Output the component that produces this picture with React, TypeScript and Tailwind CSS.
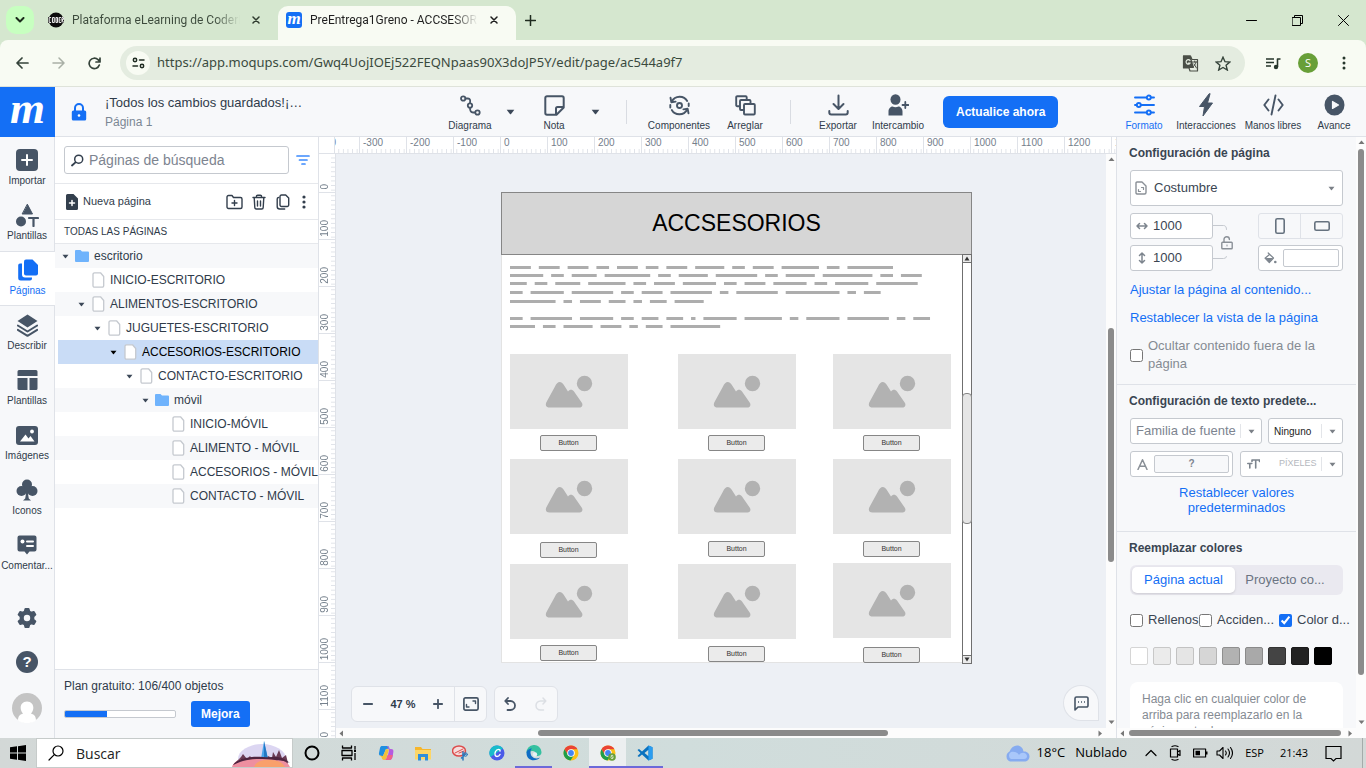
import React from "react";
import type { ReactNode } from "react";
import { clsx } from "clsx";

/* ---------- shared pieces ---------- */

const ink = "#475566";

type SvgProps = { w: number; h: number; vb?: string; className?: string; children: ReactNode };

function Svg({ w, h, vb, className, children }: SvgProps) {
  return (
    <svg
      width={w}
      height={h}
      viewBox={vb ?? `0 0 ${w} ${h}`}
      className={clsx("shrink-0", className)}
      fill="none"
      strokeLinecap="round"
      strokeLinejoin="round"
      aria-hidden="true"
    >
      {children}
    </svg>
  );
}

function Caret({ w = 8, h = 5, color = "#3c4858" }: { w?: number; h?: number; color?: string }) {
  return (
    <Svg w={w} h={h} vb="0 0 8 5">
      <path d="M0.6 0.6h6.8L4.5 4.3a.7.7 0 0 1-1 0z" fill={color} />
    </Svg>
  );
}

/* ---------- browser frame ---------- */

function BrowserTabs() {
  return (
    <div className="flex h-10 shrink-0 items-stretch bg-[#d5e7cf] text-[#1f1f1f]">
      <button aria-label="Buscar pestañas" className="ml-1.5 mt-1.5 flex size-7 items-center justify-center rounded-[10px] bg-[#c7ffc0]">
        <Svg w={10} h={6}><path d="M1.5 1l3.5 3.5L8.5 1" stroke="#1c2b1c" strokeWidth="2" /></Svg>
      </button>
      <div className="ml-3 flex w-[232px] items-center pl-0.5">
        <svg width="16" height="16" viewBox="0 0 16 16" className="shrink-0" aria-hidden="true">
          <circle cx="8" cy="8" r="7.5" fill="#0c0c0c" />
          <path d="M0 5h16v6H0z" fill="#222" />
          <path d="M3 5.500H1.200v5H3M4.500 5.500h1.800v5H4.500zM8 5.500h1.500v5H8zM13 5.500h-1.800v5H13M11.500 8h1M14 10.500v-5h1.500v2H14l1.500 3" stroke="#e8e8e8" strokeWidth="1" fill="none" />
        </svg>
        <span className="ml-2 w-[168px] overflow-hidden whitespace-nowrap bg-gradient-to-r from-[#3c4a3c] from-85% to-transparent bg-clip-text font-[Roboto,sans-serif] text-xs text-transparent">
          Plataforma eLearning de CoderHouse
        </span>
        <button aria-label="Cerrar pestaña" className="ml-auto mr-3.5 flex size-4 items-center justify-center">
          <Svg w={8} h={8}><path d="M1 1l6 6M7 1L1 7" stroke="#2f3b2f" strokeWidth="1.5" /></Svg>
        </button>
      </div>
      <div className="mt-1.5 flex w-[238px] items-center rounded-t-[10px] bg-[#f8fbf3] pb-1.5 pl-2">
        <div className="flex size-4 shrink-0 items-center justify-center overflow-hidden rounded-[3px] bg-[#146ff5] pb-[3px] font-['Liberation_Serif',serif] text-[17px] font-bold italic leading-none text-white">
          m
        </div>
        <span className="ml-2 w-[168px] overflow-hidden whitespace-nowrap bg-gradient-to-r from-[#1f1f1f] from-85% to-transparent bg-clip-text font-[Roboto,sans-serif] text-xs text-transparent">
          PreEntrega1Greno - ACCSESORIOS
        </span>
        <button aria-label="Cerrar pestaña" className="ml-auto mr-3.5 flex size-4 items-center justify-center">
          <Svg w={8} h={8}><path d="M1 1l6 6M7 1L1 7" stroke="#1f1f1f" strokeWidth="1.5" /></Svg>
        </button>
      </div>
      <button aria-label="Nueva pestaña" className="flex w-7 items-center justify-center">
        <Svg w={11} h={11}><path d="M5.5 .5v10M.5 5.5h10" stroke="#1f2b1f" strokeWidth="1.5" /></Svg>
      </button>
      <div className="ml-auto flex items-center">
        <button aria-label="Minimizar" className="flex w-[46px] justify-center"><Svg w={11} h={11}><path d="M.5 5.5h10" stroke="#000" /></Svg></button>
        <button aria-label="Restaurar" className="flex w-[46px] justify-center">
          <Svg w={11} h={11}><path d="M.5 2.5h8v8h-8zM2.5 2.5v-2h8v8h-2" stroke="#000" strokeLinejoin="miter" /></Svg>
        </button>
        <button aria-label="Cerrar" className="flex w-[46px] justify-center"><Svg w={11} h={11}><path d="M.5 .5l10 10M10.5 .5l-10 10" stroke="#000" /></Svg></button>
      </div>
    </div>
  );
}

function AddressBar() {
  return (
    <div className="flex h-[47px] shrink-0 items-center rounded-t-lg border-b border-[#dfe3da] bg-[#f8fbf3] pl-3.5 pr-5">
      <button aria-label="Atrás" className="flex w-4 justify-center">
        <Svg w={13} h={12}><path d="M12 6H1.5M6 1L1 6l5 5" stroke="#35433a" strokeWidth="1.7" /></Svg>
      </button>
      <button aria-label="Adelante" className="ml-5 flex w-4 justify-center">
        <Svg w={13} h={12}><path d="M1 6h10.500M7 1l5 5-5 5" stroke="#a9b0a6" strokeWidth="1.5" /></Svg>
      </button>
      <button aria-label="Volver a cargar" className="ml-5 flex w-4 justify-center">
        <Svg w={13} h={13}><path d="M11.3 8A5.2 5.2 0 1 1 10 2.700L12 4.700M12 1v4H8" stroke="#35433a" strokeWidth="1.7" /></Svg>
      </button>
      <div className="ml-[18px] flex h-[34px] flex-1 items-center rounded-full bg-[#e4ece0] pl-1.5 pr-3.5">
        <button aria-label="Información del sitio" className="flex size-6 shrink-0 items-center justify-center rounded-full bg-[#f8fbf3]">
          <Svg w={13} h={12}><g stroke="#1f2b22" strokeWidth="1.5"><circle cx="3" cy="3" r="1.7" /><path d="M7.5 3h4.500M1 9h4.500" /><circle cx="10" cy="9" r="1.7" /></g></Svg>
        </button>
        <input
          aria-label="Barra de direcciones"
          readOnly
          className="ml-[7px] min-w-0 flex-1 bg-transparent font-['Noto_Sans',sans-serif] text-[13px] text-[#3a4a3e] outline-none"
          value="https://app.moqups.com/Gwq4UojIOEj522FEQNpaas90X3doJP5Y/edit/page/ac544a9f7"
        />
        <button aria-label="Traducir esta página" className="flex">
          <Svg w={17} h={17}>
            <path d="M1.500 1h7l1.500 3.500H15.500v11.500H8l-1-3H1.500z" stroke="#4a4f47" strokeWidth="1.2" />
            <path d="M1 .5h7.500L12 13H1z" fill="#4a4f47" />
            <path d="M8 5.500A2.200 2.200 0 1 0 8.200 8H6.300" stroke="#e4ece0" strokeWidth="1.2" />
            <path d="M10.500 7h4.500M12.700 6v1M14 7c-.5 2-1.500 3.500-2.500 4.500M12 9l2.500 4" stroke="#4a4f47" />
          </Svg>
        </button>
        <button aria-label="Añadir a marcadores" className="ml-4 flex">
          <Svg w={16} h={15}><path d="M8 1.200l2 4.500 4.800.4-3.700 3.200 1.200 4.700L8 11.500 3.700 14l1.200-4.700L1.200 6.100 6 5.700z" stroke="#35433a" strokeWidth="1.4" strokeLinejoin="miter" /></Svg>
        </button>
      </div>
      <button aria-label="Controles multimedia" className="ml-5 flex">
        <Svg w={16} h={13}><path d="M1 2h8M1 5.500h8M1 9h5M12.500 10V2h3" stroke="#26362b" strokeWidth="1.6" strokeLinecap="butt" /><circle cx="11" cy="10" r="2.2" fill="#26362b" /></Svg>
      </button>
      <button aria-label="Perfil" className="ml-[17px] flex size-5 items-center justify-center rounded-full bg-[#689f38] text-[11px] text-white">S</button>
      <button aria-label="Menú" className="ml-6 flex">
        <Svg w={4} h={14}><g fill="#26362b"><circle cx="2" cy="2" r="1.5" /><circle cx="2" cy="7" r="1.5" /><circle cx="2" cy="12" r="1.5" /></g></Svg>
      </button>
    </div>
  );
}

/* ---------- app header ---------- */

function Tool({ label, width, active, children }: { label: string; width: string; active?: boolean; children: ReactNode }) {
  return (
    <button className={clsx("flex h-full shrink-0 flex-col items-center whitespace-nowrap text-[10px] leading-3", width, active ? "text-[#146ff5]" : "text-[#2f3b4a]")}>
      <span className="mt-1.5 flex h-6 items-center">{children}</span>
      <span className="mt-[3px]">{label}</span>
    </button>
  );
}

function AppHeader() {
  return (
    <header className="flex h-[50px] shrink-0 items-stretch border-b border-[#dfe2e8] bg-[#f7f8fa]">
      <a href="#inicio" aria-label="Moqups" className="-mb-px flex w-[55px] shrink-0 items-center justify-center bg-[#146ff5] pb-2 font-['Liberation_Serif',serif] text-[45px] font-bold italic leading-none text-white">
        m
      </a>
      <div className="flex w-[264px] shrink-0 items-center">
        <Svg w={16} h={18} className="ml-4">
          <path d="M4 8V5a4 4 0 0 1 8 0v3" stroke="#146ff5" strokeWidth="2" />
          <rect x=".8" y="7.5" width="14.4" height="10" rx="1.5" fill="#146ff5" />
          <circle cx="8" cy="12.5" r="1.3" fill="#fff" />
        </Svg>
        <div className="ml-[18px] min-w-0">
          <div className="truncate text-[13px] leading-5 text-[#2f3b4a]">¡Todos los cambios guardados!¡…</div>
          <div className="text-xs leading-[18px] text-[#7b8794]">Página 1</div>
        </div>
      </div>
      <div className="ml-[127px] flex items-center">
        <Tool label="Diagrama" width="w-12">
          <Svg w={21} h={21}><g stroke={ink} strokeWidth="1.8"><circle cx="3.2" cy="3.5" r="2.2" /><circle cx="10" cy="10.5" r="2.2" /><circle cx="17.5" cy="17.5" r="2.2" /><path d="M5.500 3.500H8c2 0 2.500 1.500 2 4.500M10 13c0 3 .8 4.500 3 4.500h2" /></g></Svg>
        </Tool>
        <button aria-label="Opciones de diagrama" className="ml-1 flex w-6 justify-center"><Caret w={9} h={6} /></button>
        <Tool label="Nota" width="w-8 ml-4">
          <Svg w={21} h={21}><path d="M3 1.300h15A1.700 1.700 0 0 1 19.700 3v9.500L12.500 19.700H3A1.700 1.700 0 0 1 1.300 18V3A1.700 1.700 0 0 1 3 1.300zM19.500 12H13.500A1.500 1.500 0 0 0 12 13.500v6" stroke={ink} strokeWidth="2" /></Svg>
        </Tool>
        <button aria-label="Opciones de nota" className="ml-[13px] flex w-6 justify-center"><Caret w={9} h={6} /></button>
        <span className="ml-[19px] h-6 w-px bg-[#d9dce2]" />
        <Tool label="Componentes" width="w-16 ml-5">
          <Svg w={21} h={21}><g stroke={ink} strokeWidth="1.9"><path d="M2.800 6.500C6 .2 15 .2 18.200 6M18.200 14.500C15 20.800 6 20.800 2.800 15" /><path d="M1.500 2.800l.9 4.400 4.200-.6M19.500 18.200l-.9-4.400-4.200.6M1.300 10v2.500M19.700 8.500V11" /><circle cx="10.5" cy="10.5" r="2.5" /></g></Svg>
        </Tool>
        <Tool label="Arreglar" width="w-11 ml-3">
          <Svg w={21} h={21}><g stroke={ink} strokeWidth="1.9" fill="#f7f8fa"><rect x="1.2" y="1.2" width="10.500" height="10" rx="1" /><rect x="5" y="5" width="10.500" height="10" rx="1" /><rect x="9" y="9" width="10.800" height="10.500" rx="1" /></g></Svg>
        </Tool>
        <span className="ml-[23px] h-6 w-px bg-[#d9dce2]" />
        <Tool label="Exportar" width="w-10 ml-[27px]">
          <Svg w={21} h={22}><path d="M10.500 1.500v13M5.500 10l5 5 5-5M1.300 17v1.500a2 2 0 0 0 2 2h14.400a2 2 0 0 0 2-2V17" stroke={ink} strokeWidth="2" /></Svg>
        </Tool>
        <Tool label="Intercambio" width="w-14 ml-3">
          <Svg w={21} h={22}><ellipse cx="7.5" cy="5.5" rx="5" ry="5.3" fill={ink} /><path d="M.5 21.500v-4c0-3.500 2.500-5 4-5 2 1 4 1 6 0 1.500 0 4 1.500 4 5v4z" fill={ink} /><path d="M17.300 8v6M14.500 11h5.800" stroke={ink} strokeWidth="1.8" /></Svg>
        </Tool>
        <button className="ml-[17px] h-8 shrink-0 rounded-md bg-[#146ff5] px-[13px] text-xs font-bold text-white">Actualice ahora</button>
      </div>
      <div className="ml-auto flex pr-3.5">
        <Tool label="Formato" width="w-10" active>
          <Svg w={21} h={22}><g stroke="#146ff5" strokeWidth="1.9"><path d="M1 3.500h11.500M17 3.500h3M1 11h1.500M7 11h13M1 18.500h11.500M17 18.500h3" /><circle cx="14.8" cy="3.5" r="2" /><circle cx="4.8" cy="11" r="2" /><circle cx="14.8" cy="18.5" r="2" /></g></Svg>
        </Tool>
        <Tool label="Interacciones" width="w-[60px] ml-3">
          <Svg w={16} h={24}><path d="M11 1L1.500 13.500h5L5 23 14.500 10H9.500L12 1z" fill={ink} stroke={ink} /></Svg>
        </Tool>
        <Tool label="Manos libres" width="w-[58px] ml-2">
          <Svg w={21} h={22}><path d="M5.500 5.500L1.300 11l4.200 5.500M15.500 5.500l4.200 5.500-4.200 5.500M12.500 1.500l-4 19" stroke={ink} strokeWidth="1.9" /></Svg>
        </Tool>
        <Tool label="Avance" width="w-9 ml-3.5">
          <Svg w={21} h={22}><ellipse cx="10.5" cy="11" rx="10" ry="10.5" fill={ink} /><path d="M8.500 7.500v7l6-3.500z" fill="#f7f8fa" stroke="#f7f8fa" strokeWidth="1.2" /></Svg>
        </Tool>
      </div>
    </header>
  );
}

/* ---------- icon rail ---------- */

const railItems: { label: string; icon: ReactNode; active?: boolean }[] = [
  {
    label: "Importar",
    icon: <Svg w={22} h={22}><rect width="22" height="22" rx="4" fill={ink} /><path d="M11 6v10M6 11h10" stroke="#fff" strokeWidth="2" /></Svg>,
  },
  {
    label: "Plantillas",
    icon: <Svg w={23} h={23}><path d="M11.500.5l5 9.500h-10z" fill={ink} stroke={ink} /><circle cx="5" cy="17.5" r="5" fill={ink} /><path d="M13 14h9M17.500 14v8" stroke={ink} strokeWidth="2.2" /></Svg>,
  },
  {
    label: "Páginas",
    active: true,
    icon: <Svg w={22} h={22}><path d="M9 .5h6.500L21 6v8.500a2 2 0 0 1-2 2H9a2 2 0 0 1-2-2v-12a2 2 0 0 1 2-2z" fill="#146ff5" /><path d="M5 4.500H3a1.800 1.800 0 0 0-1.800 1.800V19A2.500 2.500 0 0 0 3.700 21.500H13a2 2 0 0 0 2-2v-1H8a3 3 0 0 1-3-3z" fill="#146ff5" /></Svg>,
  },
  {
    label: "Describir",
    icon: <Svg w={21} h={23}><path d="M10.500.5l10 6.500-10 6.500L.5 7z" fill={ink} /><path d="M.8 11.500l9.700 6 9.700-6M.8 15.800l9.700 6 9.700-6" stroke={ink} strokeWidth="2" /></Svg>,
  },
  {
    label: "Plantillas",
    icon: <Svg w={21} h={20}><path d="M2 0h17a1.500 1.500 0 0 1 1.500 1.500V6H.5V1.500A1.500 1.500 0 0 1 2 0zM.5 8h10v12H2a1.500 1.500 0 0 1-1.500-1.500zM12.500 8h8v10.500A1.500 1.500 0 0 1 19 20h-6.500z" fill={ink} /></Svg>,
  },
  {
    label: "Imágenes",
    icon: <Svg w={22} h={19}><rect width="22" height="19" rx="3" fill={ink} /><path d="M4 15.500l5.500-7 3 4L14.500 10l4 5.500z" fill="#fff" /><circle cx="16" cy="5.5" r="1.9" fill="#fff" /></Svg>,
  },
  {
    label: "Iconos",
    icon: <Svg w={22} h={22}><circle cx="11" cy="5.5" r="5" fill={ink} /><circle cx="5.5" cy="12" r="5" fill={ink} /><circle cx="16.5" cy="12" r="5" fill={ink} /><path d="M8 8h6l-1.800 8 .6 3.500 2.200 2H7l2.200-2 .6-3.500z" fill={ink} /></Svg>,
  },
  {
    label: "Comentar...",
    icon: <Svg w={20} h={20}><path d="M2.500.5h15a2 2 0 0 1 2 2v12a2 2 0 0 1-2 2h-5L10 19.500l-2.500-3h-5a2 2 0 0 1-2-2v-12a2 2 0 0 1 2-2z" fill={ink} /><circle cx="5.5" cy="6.5" r="2" fill="#fff" /><path d="M10 6.500h6M10 11h6" stroke="#fff" strokeWidth="2" /></Svg>,
  },
];

function Rail() {
  return (
    <nav className="flex w-[55px] shrink-0 flex-col border-r border-[#dfe2e8] bg-[#f7f8fa] pt-1">
      {railItems.map((item, i) => (
        <button
          key={i}
          className={clsx(
            "flex h-[55px] flex-col items-center overflow-hidden whitespace-nowrap border-y text-[10px] leading-3",
            item.active ? "-mr-px border-[#dfe2e8] bg-white text-[#146ff5]" : "border-transparent text-[#2f3b4a]"
          )}
        >
          <span className="mt-1.5 flex h-6 items-center">{item.icon}</span>
          <span className="mt-[3px]">{item.label}</span>
        </button>
      ))}
      <div className="mt-auto flex flex-col items-center pb-[15px]">
        <button aria-label="Ajustes" className="flex">
          <Svg w={22} h={22} vb="0 0 24 24">
            <path
              fill={ink}
              fillRule="evenodd"
              stroke={ink}
              strokeWidth="2"
              d="M10.300 2h3.400l.9 3 1.900 1.100 3-.8 1.700 3-2.200 2.200v3l2.200 2.200-1.700 3-3-.8-1.900 1.100-.9 3h-3.400l-.9-3-1.900-1.100-3 .8-1.700-3L5 13.500v-3L2.800 8.300l1.700-3 3 .8L9.400 5zM12 7.500a4.500 4.500 0 1 0 0 9 4.500 4.500 0 0 0 0-9z"
            />
          </Svg>
        </button>
        <button aria-label="Ayuda" className="mt-[22px] flex size-[22px] items-center justify-center rounded-full bg-[#475566] text-[15px] font-bold text-white">?</button>
        <button aria-label="Cuenta" className="mt-5 flex">
          <Svg w={30} h={30}>
            <circle cx="15" cy="15" r="15" fill="#c4c4c4" />
            <path d="M6 27.500c0-5 2.500-6 5-7-4-4-3-12 4-12s8 8 4 12c2.500 1 5 2 5 7C19 31 11 31 6 27.500z" fill="#fff" />
          </Svg>
        </button>
      </div>
    </nav>
  );
}

/* ---------- pages panel ---------- */

type Node = { name: string; level: number; folder?: boolean; open?: boolean; selected?: boolean };

const tree: Node[] = [
  { name: "escritorio", level: 0, folder: true, open: true },
  { name: "INICIO-ESCRITORIO", level: 1 },
  { name: "ALIMENTOS-ESCRITORIO", level: 1, open: true },
  { name: "JUGUETES-ESCRITORIO", level: 2, open: true },
  { name: "ACCESORIOS-ESCRITORIO", level: 3, open: true, selected: true },
  { name: "CONTACTO-ESCRITORIO", level: 4, open: true },
  { name: "móvil", level: 5, folder: true, open: true },
  { name: "INICIO-MÓVIL", level: 6 },
  { name: "ALIMENTO - MÓVIL", level: 6 },
  { name: "ACCESORIOS - MÓVIL", level: 6 },
  { name: "CONTACTO - MÓVIL", level: 6 },
];

function TreeRow({ node, index }: { node: Node; index: number }) {
  return (
    <li className={clsx("pl-[3px]", index % 2 === 0 && !node.selected && "bg-[#f7f8fa]")}>
      <button
        className={clsx(
          "flex h-6 w-full items-center overflow-hidden whitespace-nowrap text-left text-xs",
          node.selected ? "bg-[#c9dcf6] text-black" : "text-[#2f3b4a]"
        )}
        style={{ paddingLeft: 4 + node.level * 16 }}
      >
        <span className="flex w-[13px] shrink-0">{node.open && <Caret w={7} h={5} color={node.selected ? "#000" : "#3c4858"} />}</span>
        <span className="flex w-[19px] shrink-0">
          {node.folder ? (
            <Svg w={14} h={12}><path d="M1 0h4.500l1.500 1.500H13a1 1 0 0 1 1 1V11a1 1 0 0 1-1 1H1a1 1 0 0 1-1-1V1a1 1 0 0 1 1-1z" fill="#6fb3fc" /></Svg>
          ) : (
            <Svg w={14} h={16}><path d="M3.500.8h6L12.700 4.500v9.200a1.500 1.500 0 0 1-1.500 1.500H3.500A1.500 1.500 0 0 1 2 13.700V2.300A1.500 1.500 0 0 1 3.500.8z" stroke="#c5c9cf" strokeWidth="1.3" fill="#fff" /></Svg>
          )}
        </span>
        {node.name}
      </button>
    </li>
  );
}

function PagesPanel() {
  return (
    <aside className="flex w-[264px] shrink-0 flex-col border-r border-[#dfe2e8] bg-white text-[#2f3b4a]">
      <div className="flex h-[47px] shrink-0 items-center border-b border-[#e6e8ec] pl-[9px]">
        <label className="flex h-7 w-[225px] items-center rounded-[3px] border border-[#c5c9cf] pl-1.5">
          <Svg w={13} h={13}><circle cx="7.7" cy="5.2" r="4" stroke="#333f4d" strokeWidth="1.5" /><path d="M4.500 8.300L1 11.500" stroke="#333f4d" strokeWidth="1.8" /></Svg>
          <input type="search" aria-label="Buscar páginas" placeholder="Páginas de búsqueda" className="ml-[5px] w-full min-w-0 bg-transparent text-sm outline-none placeholder:text-[#7d8490]" />
        </label>
        <button aria-label="Filtrar" className="ml-[7px] flex">
          <Svg w={14} h={12}><path d="M1 2h12M3.500 6h7.500M6 10h3" stroke="#3d8bfd" strokeWidth="1.7" /></Svg>
        </button>
      </div>
      <div className="flex h-9 shrink-0 items-center border-b border-[#e6e8ec] pl-[11px] pr-3">
        <button className="flex items-center text-[11px]">
          <Svg w={12} h={16}><path d="M1.500 0h6L12 4.500V14.500A1.500 1.500 0 0 1 10.500 16h-9A1.500 1.500 0 0 1 0 14.500v-13A1.500 1.500 0 0 1 1.500 0z" fill="#333f4d" /><path d="M6 6.500v5M3.500 9h5" stroke="#fff" strokeWidth="1.5" /></Svg>
          <span className="ml-[5px]">Nueva página</span>
        </button>
        <div className="ml-auto flex items-center">
          <button aria-label="Nueva carpeta" className="flex">
            <Svg w={17} h={16}><path d="M2.500 1.500h3.500l1.500 2h7a1.500 1.500 0 0 1 1.500 1.500v8a1.500 1.500 0 0 1-1.500 1.500h-12A1.500 1.500 0 0 1 1 13V3a1.500 1.500 0 0 1 1.500-1.500zM8.500 6.500v5M6 9h5" stroke="#333f4d" strokeWidth="1.4" /></Svg>
          </button>
          <button aria-label="Eliminar" className="ml-[9px] flex">
            <Svg w={14} h={16}><path d="M1 3.500h12M4.500 3.500v-1A1.200 1.200 0 0 1 5.700 1.200h2.600a1.200 1.200 0 0 1 1.200 1.300v1M2.200 3.500l.6 10a1.500 1.500 0 0 0 1.500 1.500h5.400a1.500 1.500 0 0 0 1.500-1.500l.6-10M5.500 7v5M8.500 7v5" stroke="#333f4d" strokeWidth="1.4" /></Svg>
          </button>
          <button aria-label="Duplicar" className="ml-2.5 flex">
            <Svg w={14} h={16}><path d="M5.500 1h4.200L12.700 4v7a1.500 1.500 0 0 1-1.500 1.500H5.500A1.500 1.500 0 0 1 4 11V2.500A1.500 1.500 0 0 1 5.500 1zM2.500 3.500A1.500 1.500 0 0 0 1.200 5v7.500A2.500 2.500 0 0 0 3.700 15h5" stroke="#333f4d" strokeWidth="1.4" /></Svg>
          </button>
          <button aria-label="Más opciones" className="ml-3 flex">
            <Svg w={4} h={14}><g fill="#333f4d"><circle cx="2" cy="2" r="1.6" /><circle cx="2" cy="7" r="1.6" /><circle cx="2" cy="12" r="1.6" /></g></Svg>
          </button>
        </div>
      </div>
      <h2 className="flex h-6 shrink-0 items-center border-b border-[#e6e8ec] pl-[9px] text-[10px]">TODAS LAS PÁGINAS</h2>
      <ul className="flex-1 overflow-hidden">
        {tree.map((node, i) => <TreeRow key={node.name} node={node} index={i} />)}
      </ul>
      <div className="h-[69px] shrink-0 border-t border-[#dfe2e8] bg-[#f7f8fa] pl-[9px] pt-2">
        <div className="text-xs leading-4">Plan gratuito: 106/400 objetos</div>
        <div className="mt-[7px] flex items-center">
          <div className="h-2 w-28 overflow-hidden rounded-[2px] border border-[#c5c9cf] bg-white">
            <div className="h-full w-[38%] bg-[#146ff5]" />
          </div>
          <button className="ml-[15px] h-[26px] rounded-[3px] bg-[#146ff5] px-2.5 text-xs font-bold text-white">Mejora</button>
        </div>
      </div>
    </aside>
  );
}

/* ---------- canvas ---------- */

function HorizontalRuler() {
  return (
    <div className="flex h-[17px] shrink-0 overflow-hidden border-b border-[#dfe2e8] bg-white">
      <div className="w-4 shrink-0 border-r border-[#dfe2e8]" />
      <div className="-ml-[23px] flex [clip-path:inset(0_0_0_23px)]">
        {Array.from({ length: 18 }, (_, i) => (
          <div
            key={i}
            className="w-[47px] shrink-0 border-l border-[#dfe2e8] bg-[linear-gradient(to_right,#dfe2e8_1px,transparent_1px)] bg-[length:10%_4px] bg-bottom bg-repeat-x pl-[3px] text-[10px] leading-3 text-[#75808c]"
          >
            {(i - 4) * 100}
          </div>
        ))}
      </div>
    </div>
  );
}

function VerticalRuler() {
  return (
    <div className="w-[17px] shrink-0 overflow-hidden border-r border-[#dfe2e8] bg-white">
      <div className="-mt-2">
        {Array.from({ length: 13 }, (_, i) => (
          <div
            key={i}
            className="flex h-[47px] items-end border-b border-[#dfe2e8] bg-[linear-gradient(to_bottom,#dfe2e8_1px,transparent_1px)] bg-[length:4px_10%] bg-right bg-repeat-y pb-0.5"
          >
            <span className="rotate-180 text-[10px] leading-[11px] text-[#75808c] [writing-mode:vertical-rl]">{i * 100}</span>
          </div>
        ))}
      </div>
    </div>
  );
}

/* Word lengths of the placeholder copy, line by line, with each line's top. */
const copyLines: { y: number; words: number[] }[] = [
  { y: 74, words: [5, 5, 5, 3, 5, 3, 5, 7, 3, 5, 9, 3, 11] },
  { y: 82, words: [8, 3, 6, 11, 3, 7, 10, 3, 7, 12, 3, 5] },
  { y: 90, words: [4, 3, 6, 9, 3, 5, 8, 3, 5, 8, 3, 8, 10] },
  { y: 99, words: [3, 8, 10, 3, 5, 10, 2, 10, 13, 2, 4] },
  { y: 108, words: [11, 2, 5, 4, 2, 4, 7] },
  { y: 125, words: [3, 10, 8, 3, 4, 4, 1, 8, 9, 2, 8, 10, 2, 4] },
  { y: 133, words: [6, 3, 7, 5, 2, 4, 12] },
];

function PlaceholderCopy() {
  const unit = 4.115;
  return (
    <svg width="471" height="150" className="absolute -left-px -top-px" aria-hidden="true">
      {copyLines.map((line) => {
        let at = 0;
        return line.words.map((n, i) => {
          const x = 9 + at * unit;
          at += n + 2;
          return <rect key={`${line.y}-${i}`} x={x} y={line.y} width={n * unit + 0.3} height="3" fill="#adadad" />;
        });
      })}
    </svg>
  );
}

const cards: { x: number; y: number; by: number }[] = [
  { x: 8, y: 161, by: 242 }, { x: 176, y: 161, by: 242 }, { x: 331, y: 161, by: 242 },
  { x: 8, y: 266, by: 349 }, { x: 176, y: 266, by: 348 }, { x: 331, y: 266, by: 348 },
  { x: 8, y: 371, by: 452 }, { x: 176, y: 371, by: 453 }, { x: 331, y: 370, by: 454 },
];

function Mockup() {
  return (
    <div className="absolute left-[165px] top-[38px] h-[471px] w-[471px] border border-[#e3e3e3] bg-white">
      <div className="absolute -left-px -top-px flex h-[63px] w-[471px] items-center justify-center border border-[#868686] bg-[#d6d6d6] text-[23px] text-black">
        ACCSESORIOS
      </div>
      <PlaceholderCopy />
      {cards.map((c, i) => (
        <React.Fragment key={i}>
          <svg width="118" height="75" viewBox="0 0 118 75" className="absolute" style={{ left: c.x, top: c.y }} aria-hidden="true">
            <rect width="118" height="75" fill="#e5e5e5" />
            <path d="M36.500 48L45 32.500c2.500-6 6.500-6 9.500-.5l3.500 5.500c1.500-2.500 4.500-2.500 6 0l8 11.500c1.200 2.500-.2 4.500-2.500 4.500H39.500c-3.500 0-4.500-2.500-3-5.500z" fill="#b2b2b2" />
            <circle cx="74.5" cy="29.5" r="7.7" fill="#b2b2b2" />
          </svg>
          <button
            className="absolute flex h-4 w-[57px] items-center justify-center rounded-[2px] border border-[#868686] bg-[#ebebeb] text-[7px] text-[#333]"
            style={{ left: c.x + 30, top: c.by }}
          >
            Button
          </button>
        </React.Fragment>
      ))}
      <div className="absolute left-[460px] top-[61px] flex h-[410px] w-2.5 flex-col border border-[#6f6f6f] bg-white">
        <div className="flex h-2 items-center justify-center border-b border-[#6f6f6f] bg-[#ebebeb]"><Svg w={6} h={5}><path d="M3 .5L5.500 4.500h-5z" fill="#333" /></Svg></div>
        <div className="-mx-px mt-[130px] h-[131px] rounded-[4px] border border-[#868686] bg-[#e5e5e5]" />
        <div className="mt-auto flex h-2 items-center justify-center border-t border-[#6f6f6f] bg-[#ebebeb]"><Svg w={6} h={5}><path d="M3 4.500L.5.5h5z" fill="#333" /></Svg></div>
      </div>
    </div>
  );
}

function ScrollArrow({ dir }: { dir: "up" | "down" | "left" | "right" }) {
  const paths = { up: "M3.500 1.500L6.500 5H.5z", down: "M3.500 5L.5 1.500h6z", left: "M1.500 3.500L5 .5v6z", right: "M5 3.500L1.500.5v6z" };
  return <Svg w={7} h={7}><path d={paths[dir]} fill="#777" /></Svg>;
}

function Canvas() {
  return (
    <main className="flex min-w-0 flex-1 flex-col">
      <HorizontalRuler />
      <div className="flex min-h-0 flex-1">
        <VerticalRuler />
        <div className="flex min-w-0 flex-1 flex-col">
          <div className="flex min-h-0 flex-1">
            <div className="relative min-w-0 flex-1 overflow-hidden bg-[#edf0f5]">
              <Mockup />
              <div className="absolute bottom-[6px] left-[15px] flex gap-[7px] text-[#2f3b4a]">
                <div className="flex h-9 items-center rounded-md border border-[#dfe2e8] bg-[#f7f8fa]">
                  <button aria-label="Alejar" className="flex w-8 justify-center"><Svg w={10} h={10}><path d="M.8 5h8.400" stroke={ink} strokeWidth="1.8" /></Svg></button>
                  <span className="w-[38px] text-center text-[11px] font-bold">47 %</span>
                  <button aria-label="Acercar" className="flex w-8 justify-center"><Svg w={10} h={10}><path d="M.8 5h8.400M5 .8v8.400" stroke={ink} strokeWidth="1.8" /></Svg></button>
                  <button aria-label="Ajustar a la ventana" className="flex h-full w-8 items-center justify-center border-l border-[#dfe2e8]">
                    <Svg w={16} h={14}><rect x=".9" y=".9" width="14.200" height="12.200" rx="1.500" stroke={ink} strokeWidth="1.7" /><path d="M10 4h2.500v2.500M6 10H3.500V7.500" stroke={ink} strokeWidth="1.4" /></Svg>
                  </button>
                </div>
                <div className="flex h-9 items-center rounded-md border border-[#dfe2e8] bg-[#f7f8fa]">
                  <button aria-label="Deshacer" className="flex w-[30px] justify-center"><Svg w={12} h={14}><path d="M4 1L1.200 4 4 7M1.500 4H6.500a4.500 4.500 0 0 1 0 9H3.500" stroke={ink} strokeWidth="1.8" /></Svg></button>
                  <button aria-label="Rehacer" className="flex w-8 justify-center"><Svg w={12} h={14}><path d="M8 1l2.800 3L8 7M10.500 4H5.500a4.500 4.500 0 0 0 0 9H8.500" stroke="#dcdfe4" strokeWidth="1.5" /></Svg></button>
                </div>
              </div>
              <button aria-label="Chat" className="absolute bottom-[7px] right-[7px] flex size-9 items-center justify-center rounded-full rounded-br-[3px] border border-[#dfe2e8] bg-[#f7f8fa]">
                <Svg w={15} h={15}><path d="M2.500 1h10A1.500 1.500 0 0 1 14 2.500v7a1.500 1.500 0 0 1-1.500 1.500H4L1 14V2.500A1.500 1.500 0 0 1 2.500 1z" stroke={ink} strokeWidth="1.6" /><path d="M4 6h1M7 6h1M10 6h1" stroke={ink} strokeWidth="1.3" strokeLinecap="butt" /></Svg>
              </button>
            </div>
            <div className="flex w-2.5 shrink-0 flex-col items-center bg-[#fcfcfc] pb-0.5 pt-0.5">
              <ScrollArrow dir="up" />
              <div className="mt-[165px] h-[234px] w-1.5 rounded-full bg-[#8b8b8b]" />
              <div className="mt-auto"><ScrollArrow dir="down" /></div>
            </div>
          </div>
          <div className="flex h-2.5 shrink-0 items-center bg-[#fcfcfc] pl-0.5 pr-3">
            <ScrollArrow dir="left" />
            <div className="ml-[193px] h-1.5 w-[350px] rounded-full bg-[#8b8b8b]" />
            <div className="ml-auto"><ScrollArrow dir="right" /></div>
          </div>
        </div>
      </div>
    </main>
  );
}

/* ---------- format panel ---------- */

const field = "flex h-[26px] items-center rounded-[3px] border border-[#c5c9cf] bg-white";

function SelectField({ label, value, className, selectClass, lead, divided }: { label: string; value: string; className: string; selectClass: string; lead?: ReactNode; divided?: boolean }) {
  return (
    <label className={clsx(className)}>
      {lead}
      <select aria-label={label} className={clsx("min-w-0 flex-1 appearance-none bg-transparent outline-none", selectClass)}>
        <option>{value}</option>
      </select>
      <span className={clsx("flex h-3.5 w-[21px] items-center justify-center", divided && "border-l border-[#e3e5e9]")}><Caret w={7} color="#7b8087" /></span>
    </label>
  );
}

function Check({ label, checked, className, labelClass }: { label: string; checked?: boolean; className: string; labelClass: string }) {
  return (
    <label className={clsx("flex items-center gap-[5px]", className)}>
      <input type="checkbox" defaultChecked={checked} className="size-[13px] shrink-0 accent-[#146ff5]" />
      <span className={labelClass}>{label}</span>
    </label>
  );
}

const swatches = ["bg-white border-[#d5d5d5]", "bg-[#ebebeb] border-[#c8c8c8]", "bg-[#e5e5e5] border-[#c2c2c2]", "bg-[#d6d6d6] border-[#b5b5b5]", "bg-[#b2b2b2] border-[#8f8f8f]", "bg-[#a9a9a9] border-[#8a8a8a]", "bg-[#444444] border-[#333333]", "bg-[#222222] border-[#1a1a1a]", "bg-black border-black"];

function FormatPanel() {
  return (
    <aside className="flex w-[250px] shrink-0 border-l border-[#dfe2e8] bg-[#f7f8fa] text-[13px] text-[#3a4552]">
      <div className="flex min-w-0 flex-1 flex-col">
        <div className="min-h-0 flex-1 overflow-hidden">
          <section className="h-[248px] border-b border-[#dfe2e8] pl-[13px] pr-[13px] pt-2">
            <h3 className="-ml-px text-xs font-bold leading-4">Configuración de página</h3>
            <SelectField
              label="Tamaño de página"
              value="Costumbre"
              className="mt-[9px] flex h-9 items-center rounded-[3px] border border-[#c5c9cf] bg-white pl-1"
              selectClass="ml-[7px] text-[13px]"
              lead={<Svg w={12} h={14}><path d="M2 1h5l4 4v6.500A1.500 1.500 0 0 1 9.500 13H2A1.300 1.300 0 0 1 1 12V2a1 1 0 0 1 1-1z" stroke="#8a9097" strokeWidth="1.4" /><path d="M6.500 6.500H8.500v2M5.500 10.500h-2v-2" stroke="#8a9097" strokeWidth="1.2" /></Svg>}
            />
            <div className="mt-[7px] flex">
              <div className="flex w-[83px] flex-col gap-1.5">
                <label className={clsx(field, "pl-[5px]")}>
                  <Svg w={12} h={8}><path d="M1 4h10M3.500 1.500L1 4l2.500 2.500M8.500 1.500L11 4 8.500 6.500" stroke="#7d858e" strokeWidth="1.5" /></Svg>
                  <input aria-label="Ancho" defaultValue="1000" className="ml-[5px] w-full min-w-0 bg-transparent outline-none" />
                </label>
                <label className={clsx(field, "pl-[5px]")}>
                  <Svg w={12} h={12}><path d="M6 1v10M3.500 3.500L6 1l2.500 2.500M3.500 8.500L6 11l2.500-2.500" stroke="#7d858e" strokeWidth="1.5" /></Svg>
                  <input aria-label="Alto" defaultValue="1000" className="ml-[5px] w-full min-w-0 bg-transparent outline-none" />
                </label>
              </div>
              <button aria-label="Bloquear proporción" className="flex">
                <Svg w={22} h={58}>
                  <path d="M0 12.500h10.500q3 0 3 4M0 45.500h10.500q3 0 3-2" stroke="#c5c9cf" />
                  <rect x="8.8" y="29.3" width="10.400" height="6.500" rx=".8" stroke="#8a9097" strokeWidth="1.4" />
                  <path d="M11 29v-2.500a2.700 2.700 0 0 1 5.400 0" stroke="#8a9097" strokeWidth="1.4" /><path d="M14 32v1" stroke="#8a9097" />
                </Svg>
              </button>
              <div className="ml-auto flex w-[85px] flex-col gap-1.5">
                <div className="flex h-[26px] rounded-[3px] border border-[#dfe2e8]">
                  <button aria-label="Vertical" className="flex w-[41px] items-center justify-center"><Svg w={10} h={16}><rect x=".8" y=".8" width="8.400" height="14.400" rx="1.500" stroke="#66727f" strokeWidth="1.6" /></Svg></button>
                  <button aria-label="Horizontal" className="flex flex-1 items-center justify-center border-l border-[#dfe2e8]"><Svg w={16} h={10}><rect x=".8" y=".8" width="14.400" height="8.400" rx="1.500" stroke="#66727f" strokeWidth="1.6" /></Svg></button>
                </div>
                <div className={clsx(field, "pl-[5px] pr-[3px]")}>
                  <Svg w={13} h={12}><path d="M4.200 1l5.300 5-4.200 4.500L1 6.200 5.500 2.500" stroke="#7d858e" strokeWidth="1.2" /><path d="M1.500 6h7.500l-3.700 4.200z" fill="#7d858e" /><circle cx="11.3" cy="10" r="1.3" fill="#7d858e" /></Svg>
                  <button aria-label="Color de fondo" className="ml-auto h-[18px] w-14 rounded-[2px] border border-[#c5c9cf] bg-white" />
                </div>
              </div>
            </div>
            <a href="#ajustar" className="mt-[11px] block leading-4 text-[#146ff5]">Ajustar la página al contenido...</a>
            <a href="#restablecer" className="mt-3 block leading-4 text-[#146ff5]">Restablecer la vista de la página</a>
            <Check label="Ocultar contenido fuera de la página" className="mt-[11px]" labelClass="leading-[18px] text-[#858b93]" />
          </section>
          <section className="h-[147px] border-b border-[#dfe2e8] px-[13px] pt-2">
            <h3 className="-ml-px truncate text-xs font-bold leading-4">Configuración de texto predete...</h3>
            <div className="mt-[9px] flex gap-1.5">
              <SelectField label="Familia de fuente" value="Familia de fuente" className={clsx(field, "w-[132px] pl-[5px]")} selectClass="text-[13px] text-[#7d8490]" divided />
              <SelectField label="Estilo de fuente" value="Ninguno" className={clsx(field, "w-[75px] pl-[5px]")} selectClass="text-[10px] text-[#222]" divided />
            </div>
            <div className="mt-[7px] flex justify-between">
              <div className={clsx(field, "w-[103px] pl-1.5 pr-[3px]")}>
                <Svg w={11} h={11}><path d="M1 10.500L5.500.8l4.500 9.700M2.500 7.300h6" stroke="#8a9097" strokeWidth="1.5" /></Svg>
                <button aria-label="Color de texto" className="ml-auto h-[18px] w-[75px] rounded-[2px] border border-[#c5c9cf] bg-[#f7f8fa] text-[10px] font-bold leading-none text-[#7d8490]">?</button>
              </div>
              <SelectField
                label="Tamaño de texto"
                value="PÍXELES"
                className={clsx(field, "w-[103px] pl-1.5")}
                selectClass="pl-[19px] text-[9px] text-[#b4b8be]"
                lead={<Svg w={13} h={10}><path d="M5 1h7.500M5 1v1.500M12.500 1v1.500M8.700 1v8M.8 4.500h4M2.800 4.500V9" stroke="#7d858e" strokeWidth="1.600" /></Svg>}
                divided
              />
            </div>
            <a href="#valores" className="mx-auto mt-2 block w-[140px] text-center leading-[15px] text-[#146ff5]">Restablecer valores predeterminados</a>
          </section>
          <section className="pt-2 pl-[13px]">
            <h3 className="-ml-px text-xs font-bold leading-4">Reemplazar colores</h3>
            <div className="mt-[9px] flex h-[30px] w-[213px] rounded-md bg-[#eae9f0] p-0.5">
              <button className="w-[103px] rounded-[5px] bg-white text-[#146ff5] shadow-sm">Página actual</button>
              <button className="flex-1 pr-1.5 text-[#6b7482]">Proyecto co...</button>
            </div>
            <div className="mt-[17px] flex whitespace-nowrap">
              <Check label="Rellenos" className="w-[69px]" labelClass="leading-4" />
              <Check label="Acciden..." className="w-20" labelClass="leading-4" />
              <Check label="Color d..." checked className="w-[75px]" labelClass="leading-4" />
            </div>
            <div className="mt-[19px] flex gap-[5px]">
              {swatches.map((s) => <button key={s} aria-label="Color" className={clsx("size-[18px] rounded-[2px] border", s)} />)}
            </div>
            <p className="mt-[17px] w-[213px] rounded-lg bg-white px-3 py-[9px] text-xs leading-4 text-[#858b93]">
              Haga clic en cualquier color de arriba para reemplazarlo en la página actual.
            </p>
          </section>
        </div>
        <div className="flex h-2.5 shrink-0 items-center bg-[#fcfcfc] px-0.5">
          <ScrollArrow dir="left" />
          <div className="mx-[3px] h-1.5 w-[212px] rounded-full bg-[#8b8b8b]" />
          <div className="ml-auto"><ScrollArrow dir="right" /></div>
        </div>
      </div>
      <div className="flex w-2.5 shrink-0 flex-col items-center bg-[#fcfcfc] pb-3 pt-0.5">
        <ScrollArrow dir="up" />
        <div className="mb-11 mt-[3px] w-1.5 flex-1 rounded-full bg-[#8b8b8b]" />
        <ScrollArrow dir="down" />
      </div>
    </aside>
  );
}

/* ---------- taskbar ---------- */

function Chrome() {
  return (
    <>
      <circle cx="8" cy="8" r="7.5" fill="#fbc116" />
      <path d="M1.500 4.250A7.500 7.500 0 0 1 14.500 4.250L8 4.300 4.800 9.800z" fill="#ea4335" />
      <path d="M1.500 4.250A7.500 7.500 0 0 0 7.500 15.500L11.200 9.800 8 11.500 4.800 9.800z" fill="#1e9e4a" />
      <circle cx="8" cy="8" r="3.8" fill="#fff" />
      <circle cx="8" cy="8" r="2.9" fill="#4285f4" />
    </>
  );
}

const apps: { name: string; state?: "open" | "active"; art: ReactNode }[] = [
  { name: "Cortana", art: <circle cx="8" cy="8" r="6.5" stroke="#000" strokeWidth="2" /> },
  { name: "Vista de tareas", art: <g stroke="#000" strokeWidth="1.3" strokeLinecap="butt"><path d="M1.500 .5v2.500h9V.5M1.500 15.500V13h9v2.500M1 5.500h10v5H1zM14 1v3M14 8v7" /><rect x="13" y="4.500" width="2" height="2.500" fill="#000" stroke="none" /></g> },
  { name: "Copilot", art: <g><path d="M4 1h5c1.500 0 2 .8 2.500 2.500L8 4 5 11C2.500 11 .5 10.500 1 8L2 3C2.500 1.500 3 1 4 1z" fill="#1f8fe0" /><path d="M9 1c1.500 0 2 1 2.500 3H13c2 0 2.800 1 2.300 3.500L14.500 12c-.5 2-1.500 3-3 3H9L11 5z" fill="#b55be0" /><path d="M5 11l3-7 3 .5L8.500 13c-.3 1.300-1 2-2.500 2-1.500 0-2-.8-2.500-3L1.500 10.500z" fill="#f3c13a" /><path d="M9 15H6c1.500 0 2-1 2.500-2L9.500 10h5.300L14 13c-.5 1.500-1.500 2-2.500 2z" fill="#f0628a" /></g> },
  { name: "Explorador de archivos", art: <g><path d="M0 2h6l1.500 2H16v10H0z" fill="#f6b62c" /><path d="M0 5h16v9.500H0z" fill="#fdd667" /><path d="M3 9h10v6.500h-3V12H6v3.500H3z" fill="#2f8fdc" /></g> },
  { name: "Recortes", art: <g><ellipse cx="7" cy="6" rx="6.500" ry="5" fill="#f6dcdc" stroke="#dc4a4a" strokeWidth="1.5" /><path d="M3 8l8-4M7 8l5-2" stroke="#dc4a4a" /><path d="M11 7v8M13.500 9l-4 4" stroke="#2879bd" strokeWidth="1.5" /><circle cx="13.5" cy="9.5" r="1.8" stroke="#2879bd" /></g> },
  { name: "Canva", art: <g><circle cx="8" cy="8" r="7.5" fill="#4b5be8" /><path d="M8 .5A7.500 7.500 0 0 0 1.500 12L14 3.500A7.500 7.500 0 0 0 8 .5z" fill="#19bccb" /><path d="M11 6c.5-2-3-2.500-4.500.5s0 5 1.500 5 2.500-1 3-2" stroke="#fff" strokeWidth="1.4" /></g> },
  { name: "Edge", state: "open", art: <g><path d="M.5 8A7.500 7.500 0 0 1 15.500 7c0 3-2 4-5 4-2 0-1.500-1-1-2 .5-1.500-.5-3-3-3S1 7 .5 8z" fill="#35c1a0" /><path d="M.5 8c0-3 3-4.500 5.500-4.500C4 5 4 9 6 11.500c2 2.300 5 2.500 8 1C11 16.500.5 17 .5 8z" fill="#0f6cc4" /><circle cx="9" cy="9.500" r="2.2" fill="#e8f2f4" /></g> },
  { name: "Chrome", art: <Chrome /> },
  { name: "Chrome, perfil S", state: "active", art: <><Chrome /><circle cx="12" cy="12" r="3.8" fill="#689f38" /><path d="M13.200 10.800c-.5-.8-2.300-.6-2.200.4.100 1 2.200.5 2.200 1.600 0 1-1.900 1-2.400.2" stroke="#fff" strokeWidth=".8" /></> },
  { name: "Visual Studio Code", state: "open", art: <g><path d="M11.500.5L15.500 2.300v11.400l-4 1.800L5 9.500 2 12 .5 11l3-3-3-3L2 4l3 2.500zM11.500 4.800L7.500 8l4 3.200z" fill="#0a72bf" fillRule="evenodd" /><path d="M11.500.5l4 1.800v11.400l-4 1.800z" fill="#2a9df0" /></g> },
];

function Taskbar() {
  return (
    <footer className="flex h-[30px] shrink-0 items-stretch bg-gradient-to-r from-[#d3d8d7] via-[#d0dddc] to-[#d3d8d7] text-black">
      <button aria-label="Inicio" className="flex w-9 items-center justify-center">
        <Svg w={16} h={16}><path d="M0 2.200L7 1.300V7.500H0zM8 1.200L16 0v7.500H8zM0 8.500h7v6.200L0 13.800zM8 8.500h8V16l-8-1.200z" fill="#000" /></Svg>
      </button>
      <label className="flex w-[257px] items-center overflow-hidden border border-[#c6cbca] bg-white pl-[11px]">
        <Svg w={16} h={16}><circle cx="10" cy="6" r="5" stroke="#000" strokeWidth="1.2" /><path d="M6.300 9.700L1 15" stroke="#000" strokeWidth="1.2" /></Svg>
        <input aria-label="Buscar en Windows" placeholder="Buscar" className="ml-3 w-28 font-['Open_Sans',sans-serif] text-[14px] outline-none placeholder:text-[#222]" />
        <Svg w={60} h={28} className="ml-auto">
          <ellipse cx="30" cy="20" rx="24" ry="15" fill="#dcd6f2" />
          <path d="M3 24l6-6 2-3 4 5 3-3 3 4h12l3-4 4 2 1-6 3 5 3-7 3 8 4-3 2 8-4 5H3z" fill="#6a3b55" />
          <path d="M29 20L32 2l4 18z" fill="#4aa3ea" /><path d="M32 2l4 18h-4z" fill="#2378c4" />
          <path d="M0 28c2-8 14-10 28-9s26 0 30 9z" fill="#ee8fa0" />
          <path d="M22 28c2-6 10-8 17-7 7 0 12 3 14 7z" fill="#f9a06c" />
          <path d="M1 26c5-7 13-7 19-8 8-1 14 1 20 0s12 1 18 6c-6-3-10-2-15-3s-11-1-17-1-10 1-15 2-6 3-10 4z" fill="#4e2440" />
        </Svg>
      </label>
      <div className="flex">
        {apps.map((app) => (
          <button
            key={app.name}
            aria-label={app.name}
            className={clsx("flex w-[37px] items-center justify-center", app.state === "active" && "bg-[#eceff0]", app.state ? "shadow-[inset_0_-2px_0_#6c69d9]" : "")}
          >
            <Svg w={16} h={16}>{app.art}</Svg>
          </button>
        ))}
      </div>
      <div className="ml-auto flex items-center font-['Open_Sans',sans-serif]">
        <Svg w={26} h={17}><path d="M6 16.500a5.500 5.500 0 0 1-.5-10C7 2.500 10 .5 13 .5c3.500 0 6 2.500 6.500 6 3.500-.5 6 2 6 5s-2.500 5-5 5z" fill="#86abf0" /><path d="M7 14a4 4 0 0 1 0-7c4-1 7 1 8 3 2-3 7-3 8 1 0 2-1 3-3 3z" fill="#a9c7fa" /></Svg>
        <span className="ml-[7px] text-[13px]">18°C</span>
        <span className="ml-2.5 text-[13px]">Nublado</span>
        <button aria-label="Iconos ocultos" className="ml-[18px] flex"><Svg w={12} h={8}><path d="M1 6.500l5-5 5 5" stroke="#000" strokeWidth="1.2" /></Svg></button>
        <Svg w={12} h={16} className="ml-3"><path d="M3 1.500q3-1.500 6 0M3 14.500q3 1.500 6 0M1.500 4h7v8h-7zM8.500 7l2.500-1.500v5L8.500 9" stroke="#000" strokeWidth="1.2" /></Svg>
        <Svg w={15} h={10} className="ml-3"><path d="M.6 1h12v8H.6z" stroke="#000" strokeWidth="1.2" /><path d="M2.500 2.800H7v4.400H2.500zM13 3.500h1.500v3H13z" fill="#000" /></Svg>
        <Svg w={17} h={14} className="ml-2"><path d="M1 5h2.500L7 1.500v11L3.500 9H1zM9.500 5q1.500 2 0 4M12 3q3 4 0 8M14.500 1.500q4 5.500 0 11" stroke="#000" strokeWidth="1.1" /></Svg>
        <span className="ml-3 text-[11px]">ESP</span>
        <span className="ml-4 text-[11px]">21:43</span>
        <button aria-label="Notificaciones" className="ml-[17px] flex"><Svg w={17} h={17}><path d="M1 1.500h15v12h-5L8.500 16 6 13.500H1z" stroke="#000" strokeWidth="1.2" strokeLinejoin="miter" /></Svg></button>
        <span className="ml-5 mr-[3px] h-[30px] w-px bg-[#a5abaa]" />
      </div>
    </footer>
  );
}

export default function App() {
  return (
    <div className="flex h-screen flex-col overflow-hidden bg-[#d5e7cf] font-['Liberation_Sans',Arial,sans-serif]">
      <div className="shrink-0 font-['Open_Sans',sans-serif]">
        <BrowserTabs />
        <AddressBar />
      </div>
      <AppHeader />
      <div className="flex min-h-0 flex-1">
        <Rail />
        <PagesPanel />
        <Canvas />
        <FormatPanel />
      </div>
      <Taskbar />
    </div>
  );
}
